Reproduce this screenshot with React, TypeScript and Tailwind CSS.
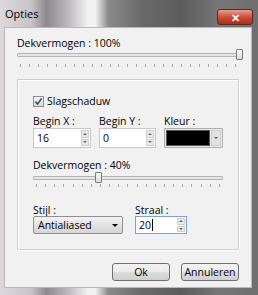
import React from "react";

const font = { fontFamily: '"Open Sans", "Noto Sans", sans-serif' };

function Ticks({ count }: { count: number }) {
  return (
    <div className="flex justify-between h-[4px] px-[3px]">
      {Array.from({ length: count }).map((_, i) => (
        <div key={i} className="w-px h-[3px] bg-[#a8a8a8]" />
      ))}
    </div>
  );
}

function Slider({ pos }: { pos: number }) {
  return (
    <div className="relative h-[11px]">
      <div className="absolute left-0 right-0 top-[4px] h-[4px] border border-[#b4b4b4] bg-[#e6e6e6] rounded-[1px]" />
      <div
        className="absolute top-0 w-[7px] h-[11px] border border-[#7a7a7a] bg-[linear-gradient(#fafafa,#dcdcdc)] rounded-[1px]"
        style={{ left: pos }}
      />
    </div>
  );
}

function Spin({ value, focused, h }: { value: string; focused?: boolean; h: string }) {
  return (
    <div className={`flex ${h} bg-white border ${focused ? "border-[#7da2ce]" : "border-[#c8c8c8]"}`}>
      <div className="flex-1 flex items-center pl-[3px] text-[10.5px] text-black leading-none">
        {value}
        {focused && <span className="w-px h-[12px] bg-black ml-[1px]" />}
      </div>
      <div className="w-[10px] flex flex-col gap-px p-px">
        <div className="flex-1 bg-[#e9e9e9] border border-[#d0d0d0] flex items-center justify-center">
          <div className="w-0 h-0 border-l-[2px] border-r-[2px] border-b-[2px] border-l-transparent border-r-transparent border-b-[#666]" />
        </div>
        <div className="flex-1 bg-[#e9e9e9] border border-[#d0d0d0] flex items-center justify-center">
          <div className="w-0 h-0 border-l-[2px] border-r-[2px] border-t-[2px] border-l-transparent border-r-transparent border-t-[#666]" />
        </div>
      </div>
    </div>
  );
}

export default function App() {
  return (
    <div
      style={font}
      className="w-[258px] h-[295px] flex flex-col bg-[linear-gradient(90deg,#ddd8db_0%,#c9c4c8_12%,#8c8a8c_18%,#b8b6b8_26%,#f2f2f2_34%,#f2f2f2_37%,#8a8a8a_42%,#6a6a6a_55%,#5c5c5c_70%,#777_85%,#6e6e6e_100%)]"
    >
      <div className="h-[27px] flex items-start justify-between shrink-0">
        <span className="pl-[5px] pt-[7px] text-[11px] leading-[14px] text-black">Opties</span>
        <div className="mt-[9px] mr-[5px] w-[36px] h-[16px] rounded-[3px] border border-[#5a2a22] bg-[linear-gradient(#e8a090,#c8503a_50%,#b02c18)] flex items-center justify-center">
          <span className="text-white text-[11px] font-bold leading-none">✕</span>
        </div>
      </div>
      <div className="ml-[4px] mr-[6px] mb-[7px] flex-1 bg-[#f1f1f1] border border-[#b9b9b9] flex flex-col px-[12px]">
        <div className="pt-[8px] text-[10.5px] leading-[14px] text-black">Dekvermogen : 100%</div>
        <div className="mt-[-1px]">
          <Slider pos={219} />
        </div>
        <div className="mt-[4px]">
          <Ticks count={25} />
        </div>
        <div className="mt-[11px] h-[171px] shrink-0 border border-[#c9cfd3] shadow-[inset_1px_1px_0_#fff,1px_1px_0_#fff] flex flex-col px-[15px]">
          <div className="mt-[14px] flex items-center gap-[3px]">
            <div className="w-[11px] h-[11px] border border-[#8f8f8f] bg-[linear-gradient(#f4f4f4,#dcdcdc)] flex items-center justify-center">
              <svg width="9" height="9" viewBox="0 0 10 10">
                <path d="M1.5 5.2 L4 7.8 L8.5 1.5" stroke="#2a4f8a" strokeWidth="1.8" fill="none" />
              </svg>
            </div>
            <span className="text-[10.5px] leading-[14px] text-black">Slagschaduw</span>
          </div>
          <div className="mt-[7px] grid grid-cols-[58px_57px_59px] gap-x-[8px]">
            <span className="text-[10.5px] leading-[13px] text-black">Begin X :</span>
            <span className="text-[10.5px] leading-[13px] text-black">Begin Y :</span>
            <span className="text-[10.5px] leading-[13px] text-black">Kleur :</span>
            <Spin value="16" h="h-[20px]" />
            <Spin value="0" h="h-[20px]" />
            <div className="h-[20px] flex border border-[#b0b0b0] bg-[#e8e8e8] p-[1px] gap-[1px]">
              <div className="flex-1 bg-black border border-[#555]" />
              <div className="w-[10px] bg-[#e2e2e2] border border-[#cfcfcf] flex items-center justify-center">
                <div className="w-0 h-0 border-l-[2px] border-r-[2px] border-t-[2px] border-l-transparent border-r-transparent border-t-[#555]" />
              </div>
            </div>
          </div>
          <div className="mt-[10px] text-[10.5px] leading-[14px] text-black">Dekvermogen : 40%</div>
          <div className="mt-[0px]">
            <Slider pos={62} />
          </div>
          <div className="mt-[1px]">
            <Ticks count={21} />
          </div>
          <div className="mt-[16px] flex gap-[12px]">
            <div className="flex flex-col w-[90px]">
              <span className="text-[10.5px] leading-[12px] text-black">Stijl :</span>
              <div className="h-[18px] border border-[#8e8f8f] rounded-[2px] bg-[linear-gradient(#f4f4f4,#e2e2e2_50%,#d6d6d6)] flex items-center justify-between pl-[4px] pr-[4px]">
                <span className="text-[10.5px] leading-none text-black">Antialiased</span>
                <div className="w-0 h-0 border-l-[3px] border-r-[3px] border-t-[3px] border-l-transparent border-r-transparent border-t-black" />
              </div>
            </div>
            <div className="flex flex-col w-[52px]">
              <span className="text-[10.5px] leading-[12px] text-black">Straal :</span>
              <Spin value="20" focused h="h-[18px]" />
            </div>
          </div>
        </div>
        <div className="mt-[13px] flex justify-end gap-[11px]">
          <div className="w-[58px] h-[18px] border border-[#707070] rounded-[3px] bg-[linear-gradient(#f2f2f2,#ebebeb_50%,#dddddd_51%,#cfcfcf)] flex items-center justify-center text-[10.5px] leading-none text-black">
            Ok
          </div>
          <div className="w-[58px] h-[18px] border border-[#707070] rounded-[3px] bg-[linear-gradient(#f2f2f2,#ebebeb_50%,#dddddd_51%,#cfcfcf)] flex items-center justify-center text-[10.5px] leading-none text-black">
            Annuleren
          </div>
        </div>
      </div>
    </div>
  );
}
